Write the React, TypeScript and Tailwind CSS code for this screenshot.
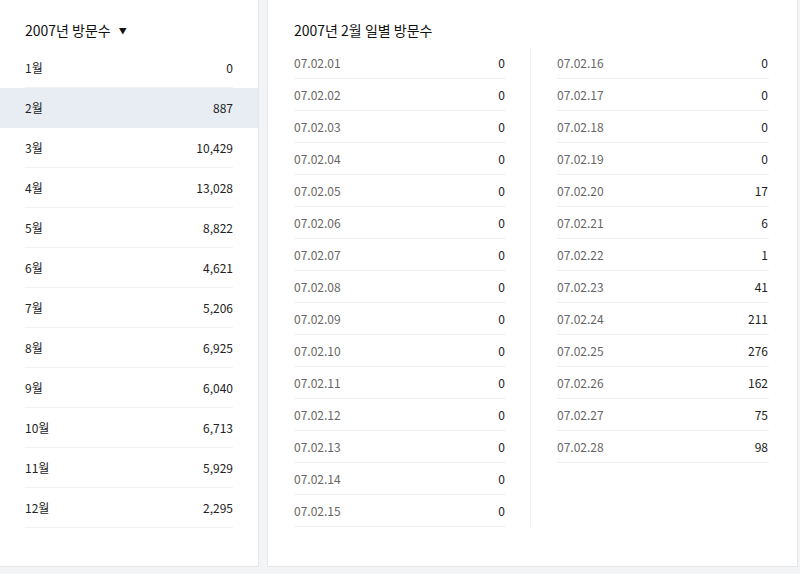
const months = ["0","887","10,429","13,028","8,822","4,621","5,206","6,925","6,040","6,713","5,929","2,295"];
const days = [0,0,0,0,0,0,0,0,0,0,0,0,0,0,0,0,0,0,0,17,6,1,41,211,276,162,75,98];
const f = { fontFamily: '"Noto Sans CJK KR", "Noto Sans", sans-serif' };

function DayCol({ start, end }: { start: number; end: number }) {
  return (
    <div className="w-[212px]">
      {days.slice(start, end).map((v, i) => {
        const d = start + i + 1;
        return (
          <div key={d} className="h-[32px] flex items-center justify-between border-b border-[#f0f1f3] text-[12px]">
            <span className="text-[#666]">07.02.{String(d).padStart(2, "0")}</span>
            <span className="text-[#222] pr-[1px]">{v}</span>
          </div>
        );
      })}
    </div>
  );
}

export default function App() {
  return (
    <div style={f} className="w-[800px] h-[574px] bg-[#f3f4f6] flex gap-[8px] pb-[7px] overflow-hidden">
      <div className="w-[259px] bg-white border-r border-b border-[#e5e7eb] -mt-px">
        <div className="h-[49px] flex items-center pl-[25px] pt-[14px] text-[14px] text-[#111]">
          2007년 방문수 <span className="ml-[8px] text-[8px]">▼</span>
        </div>
        {months.map((v, i) => (
          <div key={i} className={"h-[40px] " + (i === 1 ? "bg-[#e8edf4]" : "")}>
            <div className={"mx-[25px] h-full flex items-center justify-between text-[12px] text-[#222] " + (i === 1 ? "" : "border-b border-[#f0f1f3]")}>
              <span>{i + 1}월</span>
              <span>{v}</span>
            </div>
          </div>
        ))}
      </div>
      <div className="flex-1 bg-white border border-t-0 border-[#e5e7eb] mr-[2px]">
        <div className="h-[47px] flex items-center pl-[26px] pt-[14px] text-[14px] text-[#111]">2007년 2월 일별 방문수</div>
        <div className="flex pl-[26px]">
          <DayCol start={0} end={15} />
          <div className="w-[25px] border-r border-[#f0f1f3] mr-[26px]" />
          <DayCol start={15} end={28} />
        </div>
      </div>
    </div>
  );
}
